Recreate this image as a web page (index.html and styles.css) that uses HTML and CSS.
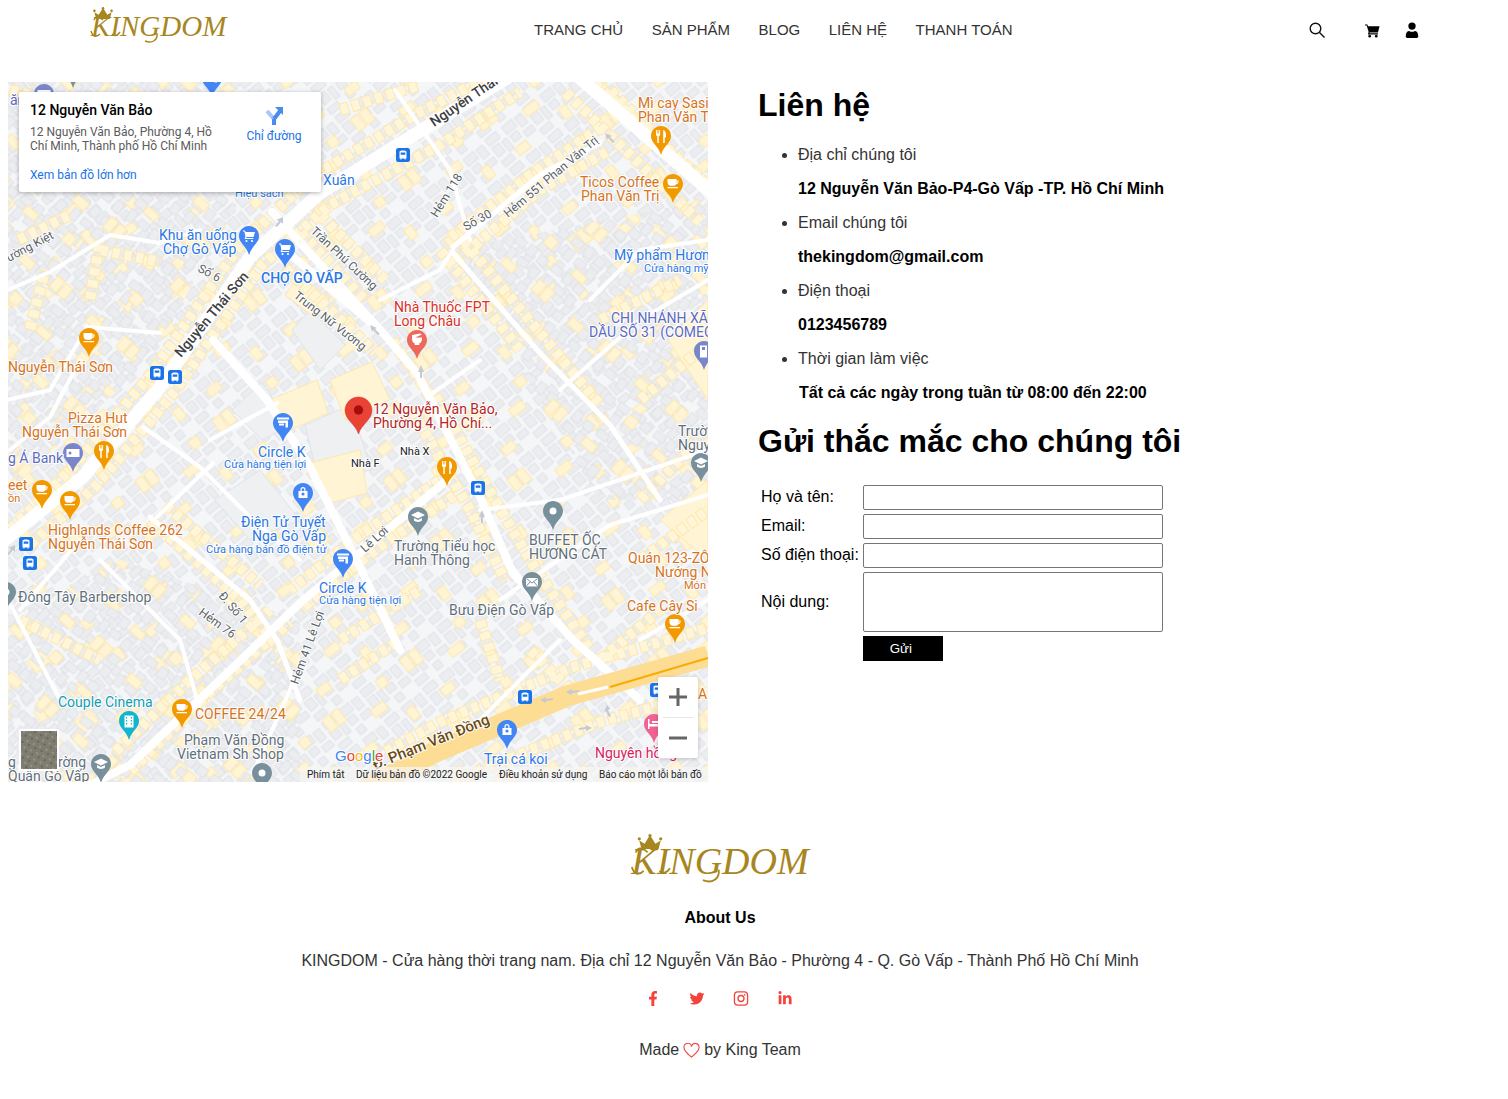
FILE: index.html
```html
<!DOCTYPE html>
<html lang="vi">
<head>
<meta charset="utf-8">
<title>Liên hệ - Kingdom</title>
<link rel="stylesheet" href="styles.css">
</head>
<body>
<header class="header">
  <a class="logo logo-sm">
    <svg class="crown" viewBox="0 0 24 14"><path d="M2 6l5 3 5-8 5 8 5-3-2 8H4z"/><circle cx="2" cy="4.5" r="1.5"/><circle cx="12" cy="1.5" r="1.5"/><circle cx="22" cy="4.5" r="1.5"/></svg>
    <span>KINGDOM</span>
    <svg class="swash" viewBox="0 0 134 38"><path d="M0 25C2 32 6 31 9 28M12 14C7 9 4 11 3 14M21 28C24 31 27 29 29 26M66 27C67 34 61 38 54 35"/></svg>
  </a>
  <nav class="nav">
    <a>TRANG CHỦ</a><a>SẢN PHẨM</a><a>BLOG</a><a>LIÊN HỆ</a><a>THANH TOÁN</a>
  </nav>
  <div class="tools">
    <svg class="tool tool-search" viewBox="0 0 16 16"><circle cx="6.5" cy="6.5" r="5.3"/><path d="M10.5 10.5L15.5 15.5"/></svg>
    <svg class="tool tool-cart" viewBox="0 0 16 16"><path d="M0 1.5h2.6l.5 2h12.4l-1.7 6.5H5l-.4 1h9.2v1.2H3l.9-2.6L1.8 2.7H0z"/><circle cx="5" cy="14" r="1.4"/><circle cx="12" cy="14" r="1.4"/></svg>
    <svg class="tool tool-user" viewBox="0 0 16 18"><circle cx="8" cy="4.5" r="4.2"/><path d="M0.8 16c0-4 2-6 4-6 1 .7 2 1 3.200 1s2.200-.3 3.200-1c2 0 4 2 4 6 0 1.200-.8 2-2 2H2.800c-1.200 0-2-.8-2-2z"/></svg>
  </div>
</header>

<main class="content">
  <section class="map">
    <svg class="map-svg" viewBox="0 0 700 700" width="700" height="700">
      <defs>
        <pattern id="blocksA" width="50" height="38" patternUnits="userSpaceOnUse" patternTransform="rotate(-40)">
          <rect x="2" y="2" width="13" height="9" class="bl"/><rect x="18" y="3" width="8" height="12" class="bl"/><rect x="31" y="1" width="14" height="8" class="bl"/>
          <rect x="3" y="14" width="9" height="8" class="bl"/><rect x="31" y="12" width="9" height="11" class="bl"/><rect x="16" y="19" width="11" height="7" class="bl"/><rect x="43" y="13" width="6" height="13" class="bl"/><rect x="4" y="27" width="8" height="8" class="bl"/><rect x="30" y="28" width="13" height="7" class="bl"/>
        </pattern>
        <pattern id="blocksB" width="46" height="34" patternUnits="userSpaceOnUse" patternTransform="rotate(38)">
          <rect x="1" y="2" width="12" height="8" class="bl"/><rect x="17" y="1" width="9" height="11" class="bl"/><rect x="31" y="3" width="10" height="9" class="bl"/>
          <rect x="3" y="15" width="8" height="12" class="bl"/><rect x="16" y="17" width="11" height="8" class="bl"/><rect x="32" y="17" width="9" height="11" class="bl"/>
        </pattern>
        <pattern id="yellowA" width="98" height="76" patternUnits="userSpaceOnUse" patternTransform="rotate(-38)">
          <rect x="6" y="6" width="9" height="15" class="yb"/><rect x="17" y="6" width="9" height="15" class="yb"/><rect x="50" y="28" width="16" height="9" class="yb"/><rect x="78" y="50" width="9" height="13" class="yb"/><rect x="20" y="54" width="14" height="9" class="yb"/><rect x="72" y="8" width="10" height="10" class="yb"/>
        </pattern>
        <pattern id="yellowB" width="90" height="80" patternUnits="userSpaceOnUse" patternTransform="rotate(42)">
          <rect x="8" y="12" width="15" height="9" class="yb"/><rect x="48" y="6" width="9" height="14" class="yb"/><rect x="59" y="6" width="9" height="14" class="yb"/><rect x="26" y="46" width="11" height="11" class="yb"/><rect x="68" y="54" width="15" height="8" class="yb"/>
        </pattern>
        <pattern id="sat" width="7" height="7" patternUnits="userSpaceOnUse" patternTransform="rotate(25)">
          <rect width="7" height="7" fill="#7f7d70"/><rect x="1" y="1" width="2" height="2" fill="#96948a"/><rect x="4" y="4" width="2" height="2" fill="#686759"/>
        </pattern>
        <path id="pinshape" d="M10 0C4.500 0 0 4.400 0 10c0 7.200 7.300 9.700 10 19 2.700-9.300 10-11.800 10-19C20 4.400 15.500 0 10 0z"/>
        <g id="p-coffee"><use href="#pinshape"/><path class="w" d="M4.500 5h9v1.600h2.200c0 2.700-.9 3.500-2.600 3.600-.6 1-1.500 1.600-2.600 1.600H8c-2.200 0-3.500-1.800-3.500-3.800zM13.600 7.600v1.500c.7-.1 1-.6 1-1.500zM4.500 13h10.500v1.200H4.500z"/></g>
        <g id="p-fork"><use href="#pinshape"/><path class="w" d="M5 4h.9v3.500h.7V4h.9v3.500h.7V4h.9v4.500c0 .9-.6 1.400-1.300 1.600v7H6.300v-7C5.600 9.900 5 9.400 5 8.500zM12.200 4c1.700.4 2.800 2 2.800 4.700v2.800h-1.300v5.600h-1.500z"/></g>
        <g id="p-cart"><use href="#pinshape"/><path class="w" d="M4 4.500h2.100l.4 1.400h9.500l-1.400 5H7.500l-.4 1h7.100v1.100H5.600l.8-2.400L5.300 5.600H4z"/><circle class="w" cx="7.500" cy="15" r="1.100"/><circle class="w" cx="13" cy="15" r="1.100"/></g>
        <g id="p-store"><use href="#pinshape"/><path class="w" d="M4 4.500h12v2H4zM5 7.500h10v7H12.500v-4.500H5z M6 10.500h5v2H6z"/></g>
        <g id="p-bag"><use href="#pinshape"/><path class="w" d="M5.500 8h9v7h-9zM7.500 8V6.500a2.500 2.500 0 0 1 5 0V8h-1.200V6.500a1.300 1.300 0 0 0-2.600 0V8z"/><circle cx="10" cy="11" r="1.600"/></g>
        <g id="p-school"><use href="#pinshape"/><path class="w" d="M10 4.500l7 3.500-7 3.500L3 8zM6 11l4 2 4-2v2.500c-1.200 1-2.500 1.400-4 1.400s-2.800-.4-4-1.400z"/></g>
        <g id="p-dot"><use href="#pinshape"/><circle class="w" cx="10" cy="10" r="3.500"/></g>
        <g id="p-mail"><use href="#pinshape"/><rect class="w" x="4" y="6" width="12" height="8.500" rx="1"/><path d="M4.500 6.500l5.500 4.500 5.500-4.500M4.500 14l4-4.500M15.500 14l-4-4.500" stroke="#78909c" fill="none"/></g>
        <g id="p-bank"><use href="#pinshape"/><rect class="w" x="3.500" y="6" width="13" height="8"/><circle cx="7" cy="10" r="1.500"/></g>
        <g id="p-fuel"><use href="#pinshape"/><path class="w" d="M6 4.500h7v12H6zM8 6v3h3V6z"/></g>
        <g id="p-film"><use href="#pinshape"/><path class="w" d="M5.500 4.500h9v12h-9zM7 6v1.500h1.200V6zM7 9v1.500h1.200V9zM7 12v1.500h1.200V12zM11.800 6v1.500H13V6zM11.800 9v1.500H13V9zM11.800 12v1.500H13V12z"/></g>
        <g id="p-bed"><use href="#pinshape"/><path class="w" d="M4 5h1.500v5H16v5h-1.500v-2.500h-9V15H4zM8 7h7v2H8z"/></g>
        <g id="p-mortar"><use href="#pinshape"/><path class="w" d="M5 5l8-1.500 2 1-7 3h7v1.500c0 2.500-1.400 4-3 4.800l.5 1.200h-5l.5-1.200C6.400 13 5 11.500 5 9z"/></g>
        <g id="bus"><rect width="14" height="14" rx="2.500" fill="#1a73e8"/><path class="w" d="M3.500 4c0-1 1-1.500 3.500-1.500S10.500 3 10.500 4v6.500H9.600V11.500H8.500v-1h-3v1H4.400v-1h-.9zM4.700 4.500v2.300h4.600V4.500z"/></g>
        <path id="rows" d="M30 545L95 487L172 395L262 265L330 205L440 145L520 92M10 530L72 468L148 378L238 248L310 178L420 112L505 68M585 75L708 185M565 92L700 222M320 215L385 280M300 232L365 300M285 268L375 352M392 340L430 395M435 395L495 500L530 560L590 650M412 410L470 510L505 580M463 240L550 345L600 405M440 250L520 350M455 262L540 190L610 150M450 238L530 175L600 128M385 752L440 722L570 668L708 628M452 782L600 722L708 692M455 495L375 550L300 610M440 480L360 535L290 590M130 772L210 692L290 622M115 752L190 680L270 610M640 500L700 440M640 560L708 510M530 650L580 700M600 660L660 610M150 520L240 600L280 650M165 505L260 585M100 250L160 262M18 240L70 215M90 300L100 240M10 90L50 100M340 110L420 85M600 320L680 280M640 400L700 350M610 90L650 130M20 620L100 660M30 330L45 270M340 640L420 590M480 620L500 680M340 680L400 640"/>
      </defs>
      <rect class="map-bg" width="700" height="700"/>
      <g transform="translate(-8 -82)">
        <rect class="fill-a" x="0" y="82" width="708" height="700"/>
        <rect class="fill-ya" x="0" y="82" width="708" height="700"/>
        <polygon class="fill-b" points="0,82 240,82 240,200 150,360 0,500"/>
        <polygon class="fill-b" points="450,250 708,200 708,500 600,500"/>
        <polygon class="fill-b" points="120,560 300,620 300,782 0,782 0,620"/>
        <polygon class="fill-yb" points="0,82 240,82 240,200 150,360 0,500"/>
        <polygon class="fill-yb" points="450,250 708,200 708,500 600,500"/>
        <polygon class="fill-yb" points="120,560 300,620 300,782 0,782 0,620"/>

        <polygon class="lot" points="305,425 350,405 372,470 318,478"/>
        <polygon class="lot" points="215,500 260,470 300,520 250,540"/>
        <polygon class="lot" points="232,410 262,382 290,425 262,440"/>
        <polygon class="lot" points="292,330 310,310 345,345 320,370"/>
        <polygon class="yel" points="270,400 317,380 328,413 290,430"/>
        <polygon class="yel" points="310,463 360,450 367,493 330,503"/>
        <polygon class="yel" points="330,380 372,362 390,400 345,420"/>
        <polygon class="yel" points="300,275 330,300 315,318 285,295"/>
        <polygon class="yel" points="660,520 708,480 708,560"/>
        <polygon class="yel" points="668,340 708,300 708,400"/>

        <use href="#rows" class="row-o"/>
        <use href="#rows" class="row-i"/>

        <path class="rd r12" d="M-5 548L83 477L160 387L250 257L320 193L430 125L520 70"/>
        <path class="rd r12" d="M573 72L720 200"/>
        <path class="rd r7" d="M272 212L383 333L417 373L480 497L513 573L573 640L640 700"/>
        <path class="rd r7" d="M285 250L383 333"/>
        <path class="rd r7" d="M213 340L267 400L310 467L360 567L400 650"/>
        <path class="rd r7" d="M447 480L367 547L300 603L220 680L130 765L60 800"/>
        <path class="rd r5" d="M453 253L540 353L610 425L660 500"/>
        <path class="rd r5" d="M453 247L540 175L600 143"/>
        <path class="rd r4" d="M143 427L200 467L253 520L300 560"/>
        <path class="rd r4" d="M210 440L277 403"/>
        <path class="rd r4" d="M157 517L213 463"/>
        <path class="rd r5" d="M150 517L250 600L277 640L300 700"/>
        <path class="rd r4" d="M8 290L50 272L110 235L160 243L200 230"/>
        <path class="rd r4" d="M7 400L50 390L87 327L160 333"/>
        <path class="rd r4" d="M80 360L50 417L10 450"/>
        <path class="rd r4" d="M293 683L253 773"/>
        <path class="rd r4" d="M480 510L560 500L708 450"/>
        <path class="rd r4" d="M500 600L610 525L708 495"/>
        <path class="rd r4" d="M560 640L480 720L440 750"/>
        <path class="rd r4" d="M590 300L640 250L708 240"/>
        <path class="rd r4" d="M380 300L440 270L453 250"/>
        <path class="rd r4" d="M480 360L430 395"/>
        <path class="rd r4" d="M395 90L450 170L470 240"/>
        <path class="rd r4" d="M560 390L640 320L708 280"/>
        <path class="rd r4" d="M20 610L80 540"/>
        <path class="rd r4" d="M8 600L60 700"/>
        <path class="rd r4" d="M100 560L180 640L200 710"/>
        <path class="rd r4" d="M640 640L708 600"/>

        <path class="hwy" d="M360 792L433 753L567 696L708 656"/>
        <path class="hwy-line" d="M610 687L708 658"/>
        <path class="hwy-gap" d="M578 694L608 687"/>

        <g class="arrows">
          <path d="M283 217l-7 3 3 1-4 5 2 1 4-5 2 2z"/><path d="M421 365l-3 7h2v6h2v-6h2z"/><path d="M605 133l7 3-2 1 5 5-2 1-5-5-1 2z"/><path d="M15 545l-7 3 3 1-4 5 2 1 4-5 2 2z"/>
          <path d="M482 510l-3 7h2v6h2v-6h2z"/><path d="M370 325l7 3-2 1 5 5-2 1-5-5-1 2z"/><path d="M566 692l6-3v2l7-1v2l-7 1v2z"/><path d="M592 728l-6-3v2l-7 1v2l7-1v2z"/><path d="M540 700l6-3v2l7-1v2l-7 1v2z"/><path d="M607 705l-3 7 2-1 3 6 2-1-3-6 2-1z"/>
        </g>

        <g class="c-or">
          <use href="#p-fork" x="651" y="126"/><use href="#p-coffee" x="663" y="174"/><use href="#p-coffee" x="79" y="328"/><use href="#p-fork" x="94" y="441"/><use href="#p-coffee" x="32" y="480"/><use href="#p-coffee" x="60" y="491"/><use href="#p-fork" x="437" y="457"/><use href="#p-coffee" x="172" y="699"/><use href="#p-coffee" x="665" y="614"/>
        </g>
        <g class="c-bl">
          <use href="#p-cart" x="239" y="226"/><use href="#p-cart" x="275" y="239"/><use href="#p-store" x="273" y="413"/><use href="#p-bag" x="293" y="483"/><use href="#p-store" x="333" y="549"/><use href="#p-bag" x="497" y="720"/><use href="#p-store" x="202" y="68"/>
        </g>
        <g class="c-gr">
          <use href="#p-school" x="408" y="507"/><use href="#p-dot" x="543" y="501"/><use href="#p-mail" x="522" y="572"/><use href="#p-school" x="691" y="453"/><use href="#p-school" x="91" y="754"/><use href="#p-dot" x="252" y="763"/><use href="#p-dot" x="-4" y="582"/><use href="#p-dot" x="63" y="59"/>
        </g>
        <g class="c-in">
          <use href="#p-bank" x="63" y="443"/><use href="#p-fuel" x="694" y="341"/><use href="#p-bank" x="34" y="84"/>
        </g>
        <g class="c-te"><use href="#p-film" x="119" y="711"/></g>
        <g class="c-pk"><use href="#p-bed" x="644" y="714"/></g>
        <g class="c-co"><use href="#p-mortar" x="407" y="330"/></g>

        <use href="#bus" x="396" y="148"/><use href="#bus" x="150" y="366"/><use href="#bus" x="168" y="370"/><use href="#bus" x="471" y="481"/><use href="#bus" x="19" y="537"/><use href="#bus" x="23" y="556"/><use href="#bus" x="518" y="690"/><use href="#bus" x="650" y="683"/>

        <g transform="translate(345 397)">
          <path class="marker" d="M13.500 0C6 0 0 6 0 13.500 0 23 10.500 27 13.500 37 16.500 27 27 23 27 13.500 27 6 21 0 13.500 0z"/>
          <circle class="marker-dot" cx="13.500" cy="13" r="4.700"/>
        </g>

        <g class="lbl t-or">
          <text x="8" y="372">Nguyễn Thái Sơn</text>
          <text x="68" y="423">Pizza Hut</text><text x="22" y="437">Nguyễn Thái Sơn</text>
          <text x="48" y="535">Highlands Coffee 262</text><text x="48" y="549">Nguyễn Thái Sơn</text>
          <text x="8" y="490">eet</text><text class="s" x="8" y="502">ồn</text>
          <text x="638" y="108">Mì cay Sasi</text><text x="638" y="122">Phan Văn Trị</text>
          <text x="580" y="187">Ticos Coffee</text><text x="581" y="201">Phan Văn Trị</text>
          <text x="628" y="563">Quán 123-ZÔ</text><text x="655" y="577">Nướng N</text><text class="s" x="684" y="589">Món</text>
          <text x="627" y="611">Cafe Cây Si</text><text x="195" y="719">COFFEE 24/24</text><text x="698" y="699">A</text>
        </g>
        <g class="lbl t-bl">
          <text x="159" y="240">Khu ăn uống</text><text x="163" y="254">Chợ Gò Vấp</text>
          <text class="m" x="261" y="283">CHỢ GÒ VẤP</text><text x="323" y="185">Xuân</text>
          <text class="s" x="235" y="197">Hiệu sách</text>
          <text x="614" y="260">Mỹ phẩm Hươn</text><text class="s" x="644" y="272">Cửa hàng mỹ</text>
          <text x="258" y="457">Circle K</text><text class="s" x="224" y="468">Cửa hàng tiện lợi</text>
          <text x="241" y="527">Điện Tử Tuyết</text><text x="252" y="541">Nga Gò Vấp</text><text class="s" x="206" y="553">Cửa hàng bán đồ điện tử</text>
          <text x="319" y="593">Circle K</text><text class="s" x="319" y="604">Cửa hàng tiện lợi</text>
          <text x="484" y="764">Trại cá koi</text>
        </g>
        <g class="lbl t-in">
          <text x="611" y="323">CHI NHÁNH XÃ</text><text x="589" y="337">DẦU SỐ 31 (COMEC</text>
          <text x="8" y="463">g Á Bank</text><text x="10" y="105">ăn</text>
        </g>
        <g class="lbl t-gr">
          <text x="394" y="551">Trường Tiểu học</text><text x="394" y="565">Hanh Thông</text>
          <text x="529" y="545">BUFFET ỐC</text><text x="529" y="559">HƯƠNG CÁT</text>
          <text x="449" y="615">Bưu Điện Gò Vấp</text><text x="18" y="602">Đông Tây Barbershop</text>
          <text x="184" y="745">Phạm Văn Đồng</text><text x="177" y="759">Vietnam Sh Shop</text>
          <text x="8" y="767">g</text><text x="58" y="767">rờng</text><text x="8" y="781">Quận Gò Vấp</text>
          <text x="678" y="436">Trườ</text><text x="678" y="450">Nguy</text>
        </g>
        <g class="lbl t-rd"><text x="394" y="312">Nhà Thuốc FPT</text><text x="394" y="326">Long Châu</text></g>
        <g class="lbl t-dr"><text x="373" y="414">12 Nguyễn Văn Bảo,</text><text x="373" y="428">Phường 4, Hồ Chí...</text></g>
        <g class="lbl t-te"><text x="58" y="707">Couple Cinema</text></g>
        <g class="lbl t-pk"><text x="595" y="758">Nguyên hồng</text></g>
        <g class="lbl t-bk"><text x="400" y="455">Nhà X</text><text x="351" y="467">Nhà F</text></g>

        <g class="lbl t-road">
          <text class="m" x="181" y="358" transform="rotate(-50 181 358)">Nguyễn Thái Sơn</text>
          <text class="m" x="434" y="127" transform="rotate(-34 434 127)">Nguyễn Thái Sơn</text>
          <text class="r" x="310" y="232" transform="rotate(43 310 232)">Trần Phú Cường</text>
          <text class="r" x="293" y="297" transform="rotate(38 293 297)">Trung Nữ Vương</text>
          <text class="r" x="197" y="271" transform="rotate(28 197 271)">Số 6</text>
          <text class="r" x="437" y="218" transform="rotate(-58 437 218)">Hẻm 118</text>
          <text class="r" x="466" y="231" transform="rotate(-29 466 231)">Số 30</text>
          <text class="r" x="508" y="218" transform="rotate(-40 508 218)">Hẻm 551 Phan Văn Trị</text>
          <text class="r" x="9" y="262" transform="rotate(-28 9 262)">ường Kiệt</text>
          <text class="r" x="365" y="553" transform="rotate(-42 365 553)">Lê Lợi</text>
          <text class="r" x="218" y="596" transform="rotate(50 218 596)">Đ. Số 1</text>
          <text class="r" x="198" y="614" transform="rotate(36 198 614)">Hẻm 76</text>
          <text class="r" x="298" y="685" transform="rotate(-70 298 685)">Hẻm 41 Lê Lợi</text>
        </g>
        <text class="t-hwy" x="375" y="770" transform="rotate(-22 375 770)">Đ. Phạm Văn Đồng</text>

        <text class="google" x="335" y="761"><tspan class="g-b">G</tspan><tspan class="g-r">o</tspan><tspan class="g-y">o</tspan><tspan class="g-b">g</tspan><tspan class="g-g">l</tspan><tspan class="g-r">e</tspan></text>

        <rect class="attr-bg" x="300" y="767" width="408" height="15"/>
        <g class="attr">
          <text x="307" y="778">Phím tắt</text><text x="356" y="778">Dữ liệu bản đồ ©2022 Google</text><text x="499" y="778">Điều khoản sử dụng</text><text x="599" y="778">Báo cáo một lỗi bản đồ</text>
        </g>
        <rect class="sat" x="20" y="730" width="38" height="40"/>
      </g>
    </svg>

    <div class="card">
      <div class="card-main">
        <div class="card-title">12 Nguyễn Văn Bảo</div>
        <div class="card-addr">12 Nguyễn Văn Bảo, Phường 4, Hồ Chí Minh, Thành phố Hồ Chí Minh</div>
        <a class="card-link">Xem bản đồ lớn hơn</a>
      </div>
      <div class="card-dir">
        <svg class="dir-icon" viewBox="0 0 20 20"><path class="dir-l" d="M10 20v-6L3 6"/><path class="dir-d" d="M10 14l6-8"/><path class="dir-a" d="M11 2h8v8z"/><path class="dir-d" d="M10 20v-6"/></svg>
        <span>Chỉ đường</span>
      </div>
    </div>

    <div class="zoomctl">
      <button class="zoom-btn" type="button"><svg viewBox="0 0 18 18"><path d="M7.500 0h3v7.500H18v3h-7.500V18h-3v-7.500H0v-3h7.500z"/></svg></button>
      <span class="zoom-sep"></span>
      <button class="zoom-btn" type="button"><svg viewBox="0 0 18 18"><path d="M0 7.500h18v3H0z"/></svg></button>
    </div>
  </section>

  <section class="info">
    <h1>Liên hệ</h1>
    <ul class="list">
      <li>Địa chỉ chúng tôi<p>12 Nguyễn Văn Bảo-P4-Gò Vấp -TP. Hồ Chí Minh</p></li>
      <li>Email chúng tôi<p>thekingdom@gmail.com</p></li>
      <li>Điện thoại<p>0123456789</p></li>
      <li>Thời gian làm việc<p class="hours">Tất cả các ngày trong tuần từ 08:00 đến 22:00</p></li>
    </ul>
    <h1>Gửi thắc mắc cho chúng tôi</h1>
    <form>
      <table class="form-table">
        <tr><td>Họ và tên:</td><td><input type="text"></td></tr>
        <tr><td>Email:</td><td><input type="text"></td></tr>
        <tr><td>Số điện thoại:</td><td><input type="text"></td></tr>
        <tr class="row-area"><td>Nội dung:</td><td><textarea></textarea></td></tr>
        <tr><td></td><td><button class="send" type="button">Gửi</button></td></tr>
      </table>
    </form>
  </section>
</main>

<footer class="footer">
  <a class="logo logo-lg">
    <svg class="crown" viewBox="0 0 24 14"><path d="M2 6l5 3 5-8 5 8 5-3-2 8H4z"/><circle cx="2" cy="4.5" r="1.5"/><circle cx="12" cy="1.5" r="1.5"/><circle cx="22" cy="4.5" r="1.5"/></svg>
    <span>KINGDOM</span>
    <svg class="swash" viewBox="0 0 134 38"><path d="M0 25C2 32 6 31 9 28M12 14C7 9 4 11 3 14M21 28C24 31 27 29 29 26M66 27C67 34 61 38 54 35"/></svg>
  </a>
  <h4 class="about">About Us</h4>
  <p class="about-text">KINGDOM - Cửa hàng thời trang nam. Địa chỉ 12 Nguyễn Văn Bảo - Phường 4 - Q. Gò Vấp - Thành Phố Hồ Chí Minh</p>
  <div class="social">
    <svg viewBox="0 0 320 512"><path d="M279.14 288l14.22-92.66h-88.91v-60.13c0-25.35 12.42-50.06 52.24-50.06h40.42V6.26S260.43 0 225.36 0c-73.22 0-121.08 44.38-121.08 124.72v70.62H22.89V288h81.39v224h100.17V288z"/></svg>
    <svg viewBox="0 0 512 512"><path d="M459.37 151.716c.325 4.548.325 9.097.325 13.645 0 138.72-105.583 298.558-298.558 298.558-59.452 0-114.68-17.219-161.137-47.106 8.447.974 16.568 1.299 25.34 1.299 49.055 0 94.213-16.568 130.274-44.832-46.132-.975-84.792-31.188-98.112-72.772 6.498.974 12.995 1.624 19.818 1.624 9.421 0 18.843-1.3 27.614-3.573-48.081-9.747-84.143-51.98-84.143-102.985v-1.299c13.969 7.797 30.214 12.67 47.431 13.319-28.264-18.843-46.781-51.005-46.781-87.391 0-19.492 5.197-37.36 14.294-52.954 51.655 63.675 129.3 105.258 216.365 109.807-1.624-7.797-2.599-15.918-2.599-24.04 0-57.828 46.782-104.934 104.934-104.934 30.213 0 57.502 12.67 76.67 33.137 23.715-4.548 46.456-13.32 66.599-25.34-7.798 24.366-24.366 44.833-46.132 57.827 21.117-2.273 41.584-8.122 60.426-16.243-14.292 20.791-32.161 39.308-52.628 54.253z"/></svg>
    <svg class="insta" viewBox="0 0 16 16"><rect x="1" y="1" width="14" height="14" rx="3.500"/><circle cx="8" cy="8" r="3.200"/><circle class="insta-dot" cx="12" cy="4" r=".9"/></svg>
    <svg viewBox="0 0 448 512"><path d="M100.28 448H7.4V148.9h92.88zM53.79 108.1C24.09 108.1 0 83.5 0 53.8a53.79 53.79 0 0 1 107.58 0c0 29.7-24.1 54.3-53.79 54.3zM447.9 448h-92.68V302.4c0-34.7-.7-79.2-48.29-79.2-48.29 0-55.69 37.7-55.69 76.7V448h-92.78V148.9h89.08v40.8h1.3c12.4-23.5 42.69-48.3 87.88-48.3 94 0 111.28 61.9 111.28 142.3V448z"/></svg>
  </div>
  <p class="made">Made <svg class="heart" viewBox="0 0 18 16"><path d="M9 15C3.500 10.500 1 8 1 5a4 4 0 0 1 8-1.200A4 4 0 0 1 17 5c0 3-2.500 5.500-8 10z"/></svg> by King Team</p>
</footer>
</body>
</html>
```
FILE: styles.css
```css
* { box-sizing: border-box; }
html, body { margin: 0; padding: 0; }
body { font-family: "Liberation Sans", Arial, sans-serif; font-size: 16px; line-height: 24px; color: #000; background: #fff; }

/* header */
.header { height: 82px; display: grid; grid-template-columns: 534px 1fr auto; align-items: start; }
.nav { height: 60px; display: flex; align-items: center; gap: 28.5px; font-size: 15px; }
.nav a { color: #333; white-space: nowrap; }
.tools { height: 60px; display: flex; align-items: center; padding-right: 89px; }
.tool { display: block; }
.tool-search { width: 16px; height: 16px; fill: none; stroke: #111; stroke-width: 1.4; margin-right: 40px; }
.tool-cart { width: 15px; height: 15px; fill: #000; margin-right: 25px; }
.tool-user { width: 14px; height: 16px; fill: #000; }

/* logo */
.logo { display: block; position: relative; font-family: "Liberation Serif", serif; font-style: italic; color: #a8861f; white-space: nowrap; }
.logo .crown { position: absolute; fill: #a8861f; }
.logo .swash { position: absolute; left: 0; top: 0; width: 100%; height: 100%; fill: none; stroke: #a8861f; stroke-width: 1.4; overflow: visible; }
.logo-sm { margin-left: 91px; margin-top: 6px; width: 134px; height: 38px; font-size: 29px; line-height: 40px; }
.logo-sm .crown { left: 0; top: 1px; width: 24px; height: 12px; }
.logo-lg { width: 178px; height: 50px; font-size: 38px; line-height: 54px; }
.logo-lg .crown { left: 6px; top: 0; width: 26px; height: 15px; }

/* main */
.content { display: grid; grid-template-columns: 700px 1fr; gap: 50px; padding: 0 8px; }
.map { position: relative; width: 700px; height: 700px; overflow: hidden; }
.map-svg { display: block; font-family: Roboto, sans-serif; }
.map-bg { fill: #f5f6f8; }
.bl { fill: #ebedf0; stroke: #dddfe3; stroke-width: .8; }
.yb { fill: #fff4d3; stroke: #fde8ad; stroke-width: 1; }
.fill-a { fill: url(#blocksA); }
.fill-b { fill: url(#blocksB); }
.fill-ya { fill: url(#yellowA); }
.fill-yb { fill: url(#yellowB); }
.lot { fill: #eef0f2; stroke: #e1e3e7; }
.yel { fill: #fff4d3; stroke: #fde8ad; }
.row-o { fill: none; stroke: #fde8ad; stroke-width: 12; stroke-dasharray: 9 3; }
.row-i { fill: none; stroke: #fff5d8; stroke-width: 10; stroke-dasharray: 7 5; stroke-dashoffset: -1; }
.rd { fill: none; stroke: #fff; stroke-linejoin: round; stroke-linecap: round; }
.r12 { stroke-width: 13; }
.r7 { stroke-width: 8; }
.r5 { stroke-width: 5; }
.r4 { stroke-width: 4; }
.hwy { fill: none; stroke: #fddc94; stroke-width: 21; }
.hwy-line { fill: none; stroke: #f9ab00; stroke-width: 2; }
.hwy-gap { fill: none; stroke: #fff; stroke-width: 3; }
.arrows { fill: #c5c9d3; }
.w { fill: #fff; }
.c-or { fill: #f29900; }
.c-bl { fill: #4285f4; }
.c-gr { fill: #78909c; }
.c-in { fill: #7986cb; }
.c-te { fill: #12b5cb; }
.c-pk { fill: #f06292; }
.c-co { fill: #ee675c; }
.marker { fill: #ea4335; stroke: #d33a2c; stroke-width: .5; }
.marker-dot { fill: #a50e0e; }

.lbl text { font-size: 14px; paint-order: stroke; stroke: #fff; stroke-width: 2px; stroke-linejoin: round; }
.lbl .s { font-size: 11px; }
.lbl .m { font-weight: 500; }
.lbl .r { font-size: 12px; }
.t-or { fill: #d5741d; }
.t-bl { fill: #2b78e4; }
.t-in { fill: #5c6bc0; }
.t-gr { fill: #5f6f7c; }
.t-rd { fill: #d93025; }
.t-dr { fill: #b3261e; }
.t-te { fill: #129eaf; }
.t-pk { fill: #d81b60; }
.t-bk { fill: #202124; }
.lbl.t-bk text { font-size: 11px; }
.t-road { fill: #5a5f66; }
.t-road .m { fill: #3c4043; }
.t-hwy { font-size: 15px; font-weight: 500; fill: #6b4a12; paint-order: stroke; stroke: #fff; stroke-width: 2px; }
.google { font-family: "Liberation Sans", sans-serif; font-size: 15px; paint-order: stroke; stroke: #fff; stroke-width: 2px; }
.g-b { fill: #4285f4; }
.g-r { fill: #ea4335; }
.g-y { fill: #fbbc05; }
.g-g { fill: #34a853; }
.attr-bg { fill: #f5f5f5; fill-opacity: .72; }
.attr { font-size: 10px; fill: #202124; }
.sat { fill: url(#sat); stroke: #fff; stroke-width: 2; }

.card { position: absolute; left: 11px; top: 10px; width: 302px; height: 100px; background: #fff; border-radius: 2px; box-shadow: 0 1px 4px rgba(0, 0, 0, .3); display: flex; padding: 9px 11px; font-family: Roboto, sans-serif; }
.card-main { width: 196px; }
.card-title { font-size: 14px; font-weight: 500; line-height: 18px; color: #000; }
.card-addr { font-size: 12px; line-height: 14px; color: #5b5b5b; margin-top: 6px; }
.card-link { display: block; font-size: 12px; line-height: 14px; color: #1a73e8; margin-top: 15px; }
.card-dir { margin-left: 20px; width: 56px; display: flex; flex-direction: column; align-items: center; font-size: 12px; line-height: 14px; color: #1a73e8; white-space: nowrap; padding-top: 4px; }
.dir-icon { width: 20px; height: 20px; fill: none; margin-bottom: 4px; }
.dir-l { stroke: #a8c7fa; stroke-width: 4; }
.dir-d { stroke: #4a8bef; stroke-width: 4; }
.dir-a { fill: #4a8bef; }

.zoomctl { position: absolute; left: 650px; top: 595px; width: 40px; height: 81px; background: #fff; border-radius: 2px; box-shadow: 0 1px 4px rgba(0, 0, 0, .2); display: flex; flex-direction: column; align-items: center; }
.zoom-btn { width: 40px; height: 40px; border: 0; padding: 0; background: none; display: flex; align-items: center; justify-content: center; }
.zoom-btn svg { width: 18px; height: 18px; fill: #666; }
.zoom-sep { width: 30px; height: 1px; background: #e6e6e6; }

/* info */
.info h1 { font-size: 32px; font-weight: 700; line-height: 38px; margin: 0; }
.info h1:first-child { margin-top: 4px; }
.list { margin: 19px 0 17px; padding-left: 40px; color: #333; }
.list p { margin: 10px 0; font-weight: 700; color: #000; }
.list li:last-child p { margin-bottom: 0; }
.list .hours { padding-left: 1px; }
form { margin-top: 22px; }
.form-table { border-spacing: 2px; font-size: 16px; line-height: 18px; }
.form-table td { padding: 1px; }
.form-table td:first-child { padding-bottom: 3px; }
.form-table .row-area td:first-child { padding-bottom: 1px; }
.form-table input, .form-table textarea { display: block; width: 300px; border: 1px solid #767676; border-radius: 2px; background: #fff; margin: 0; padding: 1px 2px; }
.form-table input { height: 25px; }
.form-table textarea { height: 60px; resize: none; }
.send { display: block; width: 80px; height: 25px; border: 0; background: #000; color: #fff; font-family: "Liberation Sans", sans-serif; font-size: 13.33px; padding: 0 4px 0 0; }

/* footer */
.footer { width: 1440px; display: flex; flex-direction: column; align-items: center; padding-top: 52px; text-align: center; }
.about { font-size: 16px; font-weight: 700; line-height: 24px; margin: 22px 0 0; }
.about-text { margin: 19px 0 0; color: #333; }
.social { margin-top: 17px; height: 16px; display: flex; align-items: center; gap: 28px; padding-right: 2px; }
.social svg { display: block; height: 15px; width: 16px; fill: #f4433c; }
.social .insta { fill: none; stroke: #f4433c; stroke-width: 1.4; }
.social .insta-dot { fill: #f4433c; stroke: none; }
.made { margin: 32px 0 37px; color: #333; display: flex; align-items: center; gap: 4px; }
.heart { width: 17px; height: 15px; fill: none; stroke: #f4433c; stroke-width: 1.2; }
```
